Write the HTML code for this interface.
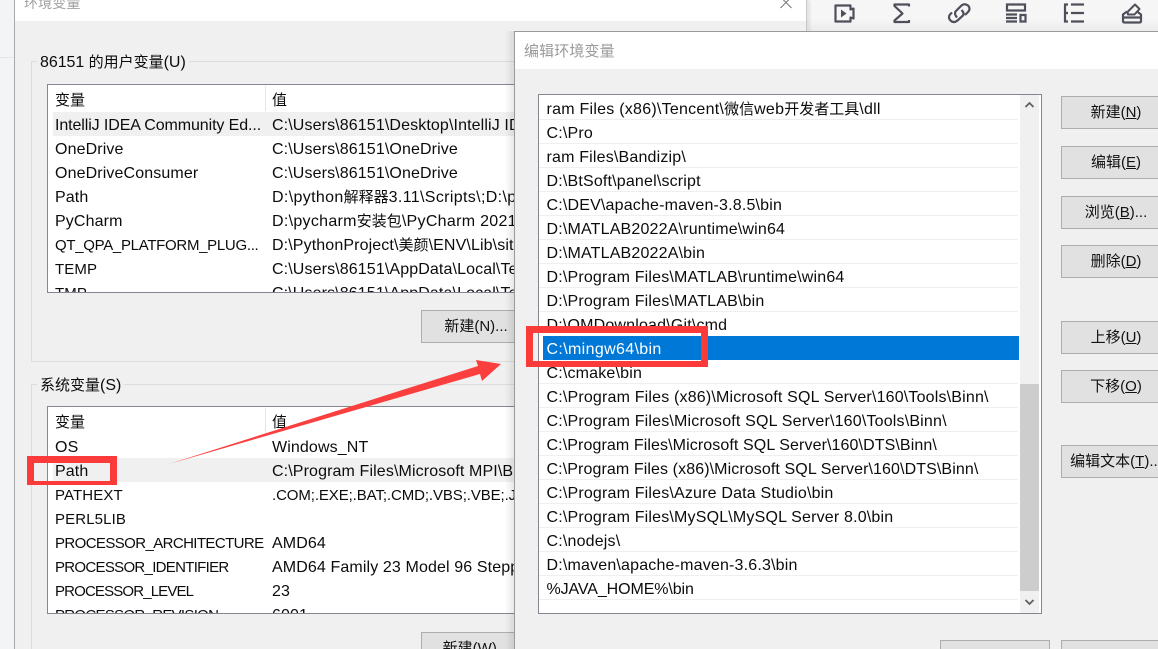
<!DOCTYPE html>
<html style="overflow:hidden;height:649px"><head><meta charset="utf-8">
<style>
html,body{margin:0;padding:0}
body{width:1158px;height:649px;overflow:hidden;background:#f3f4f6;font-family:"Liberation Sans","Noto Sans CJK SC",sans-serif;font-size:16px;color:#0c0c0c}
#r{position:absolute;left:0;top:0;width:1158px;height:649px;overflow:hidden}
.a{position:absolute}
.t{position:absolute;white-space:nowrap;line-height:24px;height:24px;letter-spacing:.12px;margin-top:2px}
.r{letter-spacing:.18px}
.t i,.b i{font-style:normal;font-size:15px;letter-spacing:0}
.b{position:absolute;box-sizing:border-box;background:#e1e1e1;border:1px solid #adadad;height:33px;text-align:center;line-height:32px;white-space:nowrap;font-size:15px;color:#111}
u{text-decoration:underline}
.l{position:absolute;left:539px;width:479px;height:1px;background:#efefef}
</style></head><body><div id="r">
<div class="a" style="left:0;top:57px;width:15px;height:1px;background:#e6e6e6"></div>
<!-- toolbar -->
<div class="a" style="left:807px;top:0;width:351px;height:32px;background:linear-gradient(#f6f6f6,#f6f6f6 60%,#ececec);border-bottom:1px solid #b5b5b5;box-sizing:border-box"></div>
<svg class="a" style="left:830px;top:0" width="328" height="31" fill="none" stroke="#4f4f5c" stroke-width="2.2">
<path d="M5.500 5.500H20.500V9.500L23.500 8.500V18.500L20.500 17.500V21.500H5.500Z" stroke-linejoin="round"/><path d="M11 9.500V17.500L16.500 13.500Z" fill="#4f4f5c" stroke="none"/>
<path d="M79 6.500V4.500H64.500V6L72.500 13.500L64.500 20.500V22H79V20" stroke-linejoin="round"/>
<path d="M127 17.500C124 14 125 11.500 126.500 10.500L131.500 5.500C134 3.500 136 4 138 5.500C140 7.500 140 10 138 12L135 15M131.500 10C134 12.500 134 14.500 132.500 16L127.500 20.500C125 22.500 122.500 22.500 120.500 20.500C118.500 18.500 118.500 16 120.500 14L122 12.500"/>
<path d="M177 4.500H195V10.500H177ZM176 14.500H187M176 18H187M176 21.500H187M190.500 15H195.500V21.500H190.500Z"/>
<path d="M235 4V22.500M234 4.500H238M234 13H238M234 21.500H238M241 4.500H254M241 13H254M241 21.500H254"/>
<path d="M297 11.500L293 14.500V21C293 22 293.500 22.500 294.500 22.500H309.500C310.500 22.500 311 22 311 21V14.500L307 11.500" stroke-linejoin="round"/><path d="M297.500 12L305 4.500L309.500 9L304.500 14.500H298Z" stroke-linejoin="round" stroke-width="2"/><path d="M293 17.500H311"/>
</svg>
<!-- outer dialog -->
<div class="a" style="left:14px;top:0;width:793px;height:649px;background:#f0f0f0;border-left:1px solid #a8a8a8;border-right:1px solid #c8c8c8;box-sizing:border-box;box-shadow:3px 0 3px rgba(0,0,0,.08)"></div>
<div class="a" style="left:15px;top:0;width:791px;height:21px;background:#fff"></div>
<div class="t" style="left:24px;top:-11px;color:#a0a0a0;font-size:14px">环境变量</div>
<svg class="a" style="left:780px;top:0" width="14" height="9" fill="none" stroke="#777"><path d="M.5-3L11.500 8M11.500-3L.5 8"/></svg>
<!-- groups -->
<div class="a" style="left:31px;top:61px;width:600px;height:301px;border:1px solid #dcdcdc;box-sizing:border-box"></div>
<div class="a" style="left:31px;top:384px;width:600px;height:280px;border:1px solid #dcdcdc;box-sizing:border-box"></div>
<div class="t" style="left:37px;top:49px;background:#f0f0f0;padding:0 3px;letter-spacing:-.05px">86151 <i>的用户变量</i>(U)</div>
<div class="t" style="left:37px;top:372px;background:#f0f0f0;padding:0 3px;letter-spacing:0"><i>系统变量</i>(S)</div>
<!-- user list -->
<div class="a" style="left:47px;top:84px;width:600px;height:209px;background:#fff;border:1px solid #828790;box-sizing:border-box;overflow:hidden">
<div class="a" style="left:5px;top:27px;width:590px;height:24px;background:#f0f0f0"></div>
<div class="a" style="left:217px;top:1px;width:1px;height:25px;background:#e5e5e5"></div>
<div class="t" style="left:7px;top:2px"><i>变量</i></div><div class="t" style="left:224px;top:2px"><i>值</i></div>
<div class="t" style="left:7px;top:27px;letter-spacing:-.1px">IntelliJ IDEA Community Ed...</div><div class="t" style="left:224px;top:27px">C:\Users\86151\Desktop\IntelliJ IDEA</div>
<div class="t" style="left:7px;top:51px">OneDrive</div><div class="t" style="left:224px;top:51px">C:\Users\86151\OneDrive</div>
<div class="t" style="left:7px;top:75px">OneDriveConsumer</div><div class="t" style="left:224px;top:75px">C:\Users\86151\OneDrive</div>
<div class="t" style="left:7px;top:99px">Path</div><div class="t" style="left:224px;top:99px;letter-spacing:.35px">D:\python<i>解释器</i>3.11\Scripts\;D:\python</div>
<div class="t" style="left:7px;top:123px">PyCharm</div><div class="t" style="left:224px;top:123px;letter-spacing:.3px">D:\pycharm<i>安装包</i>\PyCharm 2021.3</div>
<div class="t" style="left:7px;top:147px;font-size:15px;letter-spacing:-.3px">QT_QPA_PLATFORM_PLUG...</div><div class="t" style="left:224px;top:147px">D:\PythonProject\<i>美颜</i>\ENV\Lib\site</div>
<div class="t" style="left:7px;top:171px;font-size:15px">TEMP</div><div class="t" style="left:224px;top:171px">C:\Users\86151\AppData\Local\Temp</div>
<div class="t" style="left:7px;top:195px;font-size:15px">TMP</div><div class="t" style="left:224px;top:195px">C:\Users\86151\AppData\Local\Temp</div>
</div>
<div class="b" style="left:421px;top:310px;width:110px"><i>新建</i>(N)...</div>
<!-- system list -->
<div class="a" style="left:47px;top:406px;width:600px;height:208px;background:#fff;border:1px solid #828790;box-sizing:border-box;overflow:hidden">
<div class="a" style="left:5px;top:51px;width:590px;height:24px;background:#f0f0f0"></div>
<div class="a" style="left:217px;top:1px;width:1px;height:25px;background:#e5e5e5"></div>
<div class="t" style="left:7px;top:2px"><i>变量</i></div><div class="t" style="left:224px;top:2px"><i>值</i></div>
<div class="t" style="left:7px;top:27px">OS</div><div class="t" style="left:224px;top:27px">Windows_NT</div>
<div class="t" style="left:7px;top:51px">Path</div><div class="t" style="left:224px;top:51px">C:\Program Files\Microsoft MPI\Bin\</div>
<div class="t" style="left:7px;top:75px;font-size:15px">PATHEXT</div><div class="t" style="left:224px;top:75px;font-size:15px;letter-spacing:-.1px">.COM;.EXE;.BAT;.CMD;.VBS;.VBE;.JS;</div>
<div class="t" style="left:7px;top:99px;font-size:15px">PERL5LIB</div>
<div class="t" style="left:7px;top:123px;font-size:15px;letter-spacing:-.6px">PROCESSOR_ARCHITECTURE</div><div class="t" style="left:224px;top:123px">AMD64</div>
<div class="t" style="left:7px;top:147px;font-size:15px;letter-spacing:-.7px">PROCESSOR_IDENTIFIER</div><div class="t" style="left:224px;top:147px">AMD64 Family 23 Model 96 Stepping</div>
<div class="t" style="left:7px;top:171px;font-size:15px;letter-spacing:-.85px">PROCESSOR_LEVEL</div><div class="t" style="left:224px;top:171px">23</div>
<div class="t" style="left:7px;top:195px;font-size:15px;letter-spacing:-.7px">PROCESSOR_REVISION</div><div class="t" style="left:224px;top:195px">6001</div>
</div>
<div class="b" style="left:421px;top:632px;width:110px"><i>新建</i>(W)...</div>
<!-- arrow -->
<svg class="a" style="left:0;top:0;z-index:3" width="520" height="649"><path d="M169 464L478 366L476 360L501 364L482 381L480 374Z" fill="#fb3f3f"/></svg>
<!-- red box path -->
<div class="a" style="left:27px;top:456px;width:90px;height:29px;box-sizing:border-box;border:solid #fb3a3a;border-width:7px 7px 4px 7px;z-index:3"></div>
<!-- edit dialog -->
<div class="a" style="left:505px;top:31px;width:10px;height:618px;background:linear-gradient(to right,rgba(0,0,0,0),rgba(0,0,0,.1))"></div>
<div class="a" style="left:514px;top:31px;width:644px;height:618px;background:#f0f0f0;border:1px solid #9a9a9a;border-right:0;border-bottom:0;box-sizing:border-box"></div>
<div class="a" style="left:515px;top:32px;width:643px;height:37px;background:#fff"></div>
<div class="t" style="left:524px;top:38px;color:#9a9a9a;font-size:15px">编辑环境变量</div>
<div class="a" style="left:538px;top:94px;width:504px;height:520px;background:#fff;border:1px solid #828790;box-sizing:border-box"></div>
<div class="a" style="left:1020px;top:95px;width:19px;height:518px;background:#f0f0f0"></div>
<div class="a" style="left:1020px;top:384px;width:19px;height:207px;background:#cdcdcd"></div>
<svg class="a" style="left:1020px;top:95px" width="19" height="518" fill="none" stroke="#606060" stroke-width="1.800"><path d="M5.500 12L9.500 8L13.500 12M5.500 505L9.500 509L13.500 505"/></svg>
<div class="l" style="top:119px"></div><div class="l" style="top:143px"></div><div class="l" style="top:167px"></div><div class="l" style="top:191px"></div><div class="l" style="top:215px"></div><div class="l" style="top:239px"></div><div class="l" style="top:263px"></div><div class="l" style="top:287px"></div><div class="l" style="top:311px"></div><div class="l" style="top:383px"></div><div class="l" style="top:407px"></div><div class="l" style="top:431px"></div><div class="l" style="top:455px"></div><div class="l" style="top:479px"></div><div class="l" style="top:503px"></div><div class="l" style="top:527px"></div><div class="l" style="top:551px"></div><div class="l" style="top:575px"></div><div class="l" style="top:599px"></div>
<div class="a" style="left:543px;top:336px;width:476px;height:24px;background:#0078d7"></div>
<div class="t r" style="left:546.500px;top:96px;letter-spacing:.25px">ram Files (x86)\Tencent\<i>微信</i>web<i>开发者工具</i>\dll</div>
<div class="t r" style="left:546.500px;top:120px">C:\Pro</div>
<div class="t r" style="left:546.500px;top:144px">ram Files\Bandizip\</div>
<div class="t r" style="left:546.500px;top:168px">D:\BtSoft\panel\script</div>
<div class="t r" style="left:546.500px;top:192px">C:\DEV\apache-maven-3.8.5\bin</div>
<div class="t r" style="left:546.500px;top:216px">D:\MATLAB2022A\runtime\win64</div>
<div class="t r" style="left:546.500px;top:240px">D:\MATLAB2022A\bin</div>
<div class="t r" style="left:546.500px;top:264px">D:\Program Files\MATLAB\runtime\win64</div>
<div class="t r" style="left:546.500px;top:288px">D:\Program Files\MATLAB\bin</div>
<div class="t r" style="left:546.500px;top:312px">D:\QMDownload\Git\cmd</div>
<div class="t r" style="left:546.500px;top:336px;color:#fff;letter-spacing:.35px">C:\mingw64\bin</div>
<div class="t r" style="left:546.500px;top:360px">C:\cmake\bin</div>
<div class="t r" style="left:546.500px;top:384px">C:\Program Files (x86)\Microsoft SQL Server\160\Tools\Binn\</div>
<div class="t r" style="left:546.500px;top:408px">C:\Program Files\Microsoft SQL Server\160\Tools\Binn\</div>
<div class="t r" style="left:546.500px;top:432px;letter-spacing:.1px">C:\Program Files\Microsoft SQL Server\160\DTS\Binn\</div>
<div class="t r" style="left:546.500px;top:456px;letter-spacing:.1px">C:\Program Files (x86)\Microsoft SQL Server\160\DTS\Binn\</div>
<div class="t r" style="left:546.500px;top:480px">C:\Program Files\Azure Data Studio\bin</div>
<div class="t r" style="left:546.500px;top:504px">C:\Program Files\MySQL\MySQL Server 8.0\bin</div>
<div class="t r" style="left:546.500px;top:528px">C:\nodejs\</div>
<div class="t r" style="left:546.500px;top:552px">D:\maven\apache-maven-3.6.3\bin</div>
<div class="t r" style="left:546.500px;top:576px;letter-spacing:-.1px">%JAVA_HOME%\bin</div>
<div class="a" style="left:526px;top:326px;width:182px;height:41px;box-sizing:border-box;border:solid #fb3a3a;border-width:7px 7px 6px 7px"></div>
<div class="b" style="left:1061px;top:96px;width:110px"><i>新建</i>(<u>N</u>)</div>
<div class="b" style="left:1061px;top:146px;width:110px"><i>编辑</i>(<u>E</u>)</div>
<div class="b" style="left:1061px;top:196px;width:110px"><i>浏览</i>(<u>B</u>)...</div>
<div class="b" style="left:1061px;top:245px;width:110px"><i>删除</i>(<u>D</u>)</div>
<div class="b" style="left:1061px;top:321px;width:110px"><i>上移</i>(<u>U</u>)</div>
<div class="b" style="left:1061px;top:370px;width:110px"><i>下移</i>(<u>O</u>)</div>
<div class="b" style="left:1061px;top:445px;width:110px"><i>编辑文本</i>(<u>T</u>)...</div>
<div class="b" style="left:940px;top:640px;width:110px"></div>
<div class="b" style="left:1061px;top:640px;width:110px"></div>
</div></body></html>
